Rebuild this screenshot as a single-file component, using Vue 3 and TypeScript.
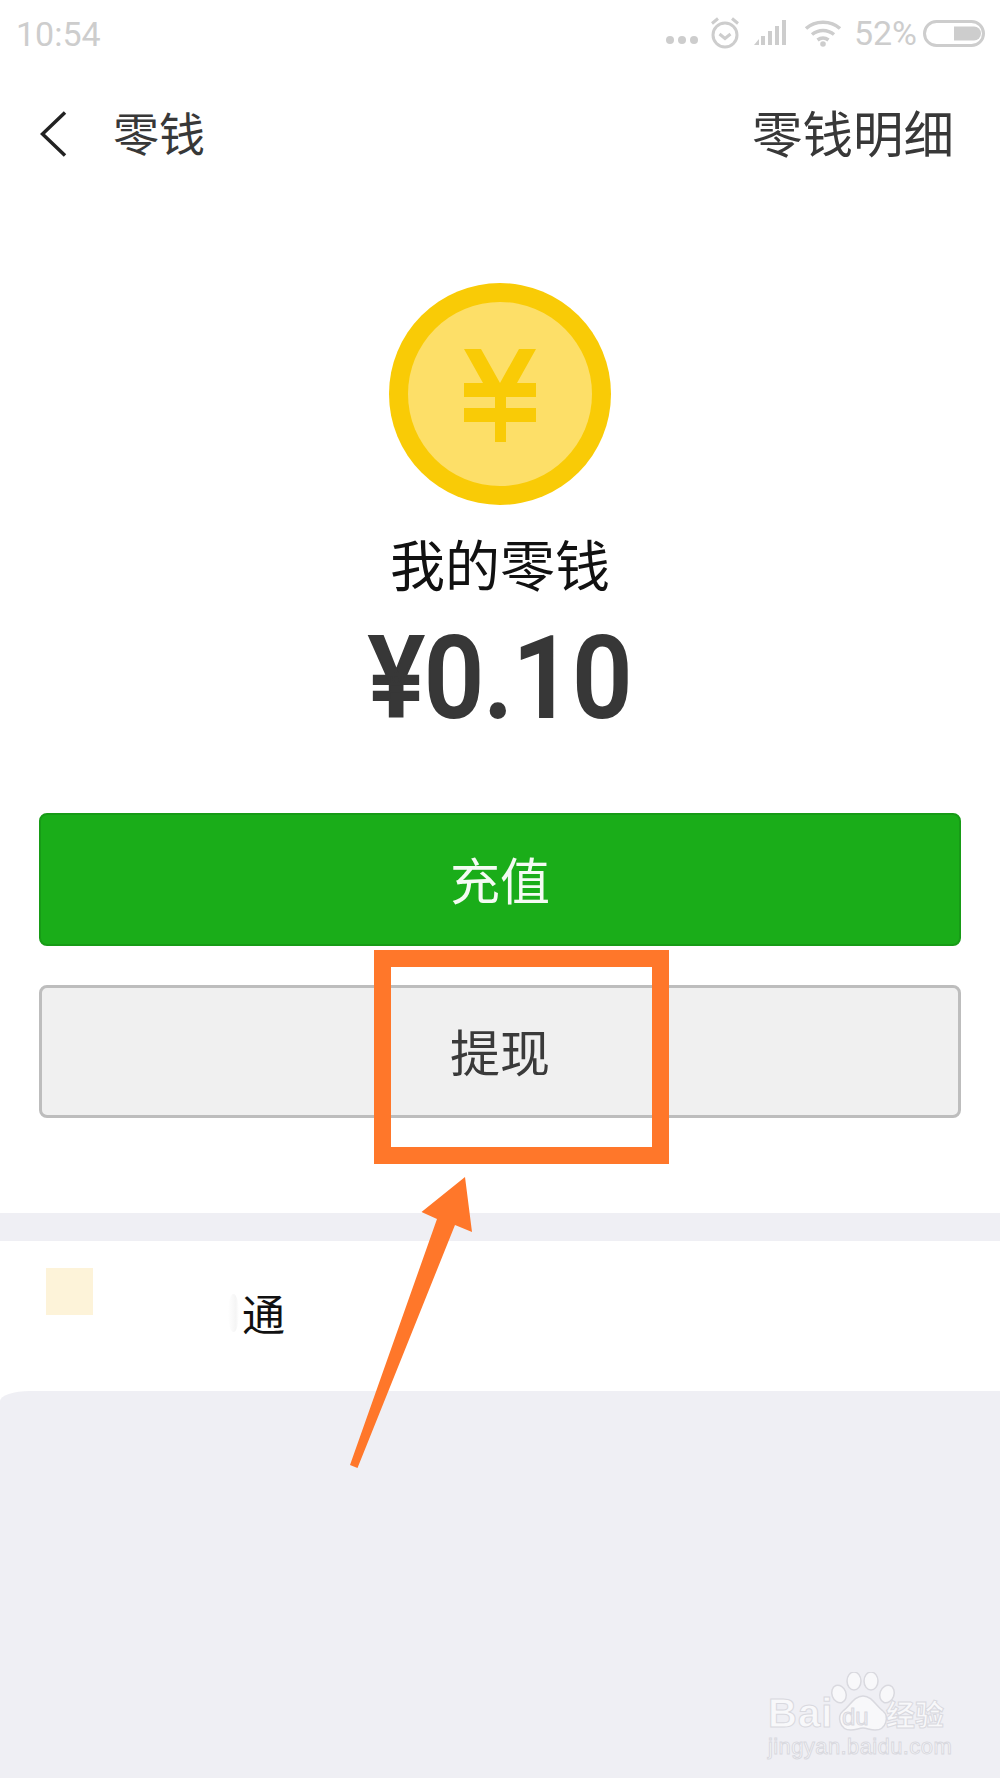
<script setup lang="ts">
const signalBars: { x: number; y: number }[] = [
  { x: 760, y: 36 },
  { x: 767, y: 31 },
  { x: 774, y: 26 },
  { x: 781, y: 20 },
]
</script>

<template>
  <div class="page">
    <header class="status">
      <span class="time">10:54</span>
      <div class="status-right">
        <svg class="ic-dots" width="32" height="10" viewBox="0 0 32 10">
          <circle cx="4" cy="5" r="4" />
          <circle cx="16" cy="5" r="4" />
          <circle cx="28" cy="5" r="4" />
        </svg>
        <svg class="ic-alarm" width="30" height="32" viewBox="0 0 30 32">
          <circle cx="15" cy="18" r="12" />
          <path d="M9.500 17l5.500 4.500 5.500-4.500M2 6.500l6-5M28 6.500l-6-5" />
        </svg>
        <svg class="ic-signal" width="36" height="26" viewBox="753 20 36 26">
          <path d="M753 45l5-6v6z" />
          <rect v-for="b in signalBars" :key="b.x" :x="b.x" :y="b.y" width="4" :height="45 - b.y" />
        </svg>
        <svg class="ic-wifi" width="38" height="28" viewBox="0 0 38 28">
          <path d="M2 9.500C11 1 27 1 36 9.500M8 15.500c6.500-5.500 15.500-5.500 22 0M13.500 21c3.500-2.500 7.500-2.500 11 0" />
          <circle cx="19" cy="25" r="2.800" />
        </svg>
        <span class="pct">52%</span>
        <svg class="ic-batt" width="62" height="27" viewBox="0 0 62 27">
          <rect x="1.500" y="1.500" width="59" height="24" rx="12" />
          <path d="M31 6.500h20a7 7 0 0 1 0 14H31z" />
        </svg>
      </div>
    </header>

    <nav class="nav">
      <div class="nav-left">
        <svg class="back" width="27" height="46" viewBox="0 0 27 46">
          <path d="M25 1.500L2.500 23 25 44.500" />
        </svg>
        <span class="nav-title">零钱</span>
      </div>
      <span class="nav-link">零钱明细</span>
    </nav>

    <section class="hero">
      <svg class="coin" width="222" height="222" viewBox="0 0 222 222">
        <circle cx="111" cy="111" r="111" fill="#f9cb06" />
        <circle cx="111" cy="111" r="92" fill="#fddf68" />
        <path
          fill="#f9cb06"
          d="M75 66H92L111 100 130 66H147L128 100H147V114H117V125H147V139H117V159H106V139H75V125H106V114H75V100H94Z"
        />
      </svg>
      <div class="hero-label">我的零钱</div>
      <div class="hero-amount">¥0.10</div>
    </section>

    <div class="actions">
      <button class="btn btn-green" type="button">充值</button>
      <button class="btn btn-gray" type="button">提现</button>
    </div>

    <div class="band"></div>

    <div class="row">
      <div class="row-icon"></div>
      <span class="row-smudge"></span>
      <span class="row-text">通</span>
    </div>

    <div class="rest"></div>

    <div class="highlight"></div>
    <svg class="arrow" width="130" height="300" viewBox="350 1175 130 300">
      <path d="M465 1177L421.500 1212 437 1219 350 1465 357.500 1468 455 1225 472 1232z" />
    </svg>

    <div class="mark">
      <svg class="paw" width="74" height="60" viewBox="0 0 74 60">
        <ellipse cx="11" cy="22" rx="7" ry="9" transform="rotate(-20 11 22)" />
        <ellipse cx="26" cy="9" rx="7" ry="9" />
        <ellipse cx="43" cy="9" rx="7" ry="9" />
        <ellipse cx="59" cy="22" rx="7" ry="9" transform="rotate(20 59 22)" />
        <path d="M35 24c9 0 13 10 20 15 6 5 4 19-8 19-5 0-8-2-12-2s-7 2-12 2C11 58 9 44 15 39c7-5 11-15 20-15z" />
      </svg>
      <div class="mark-top">
        <span class="mark-bai">Bai</span>
        <span class="mark-du">du</span>
        <span class="mark-cn">经验</span>
      </div>
      <div class="mark-url">jingyan.baidu.com</div>
    </div>
  </div>
</template>

<style scoped>
.page {
  position: relative;
  width: 1000px;
  height: 1778px;
  overflow: hidden;
  display: flex;
  flex-direction: column;
  background: #fff;
  font-family: "Noto Sans CJK SC", "Noto Sans", sans-serif;
}

.status {
  height: 60px;
  flex: none;
  display: flex;
  align-items: center;
  justify-content: space-between;
  padding: 0 15px 0 16px;
  color: #cdcdcd;
  font-family: Roboto, sans-serif;
  font-size: 34px;
}
.time {
  position: relative;
  top: 4px;
}
.status-right {
  display: flex;
  align-items: center;
  position: relative;
  top: 3px;
}
.ic-dots {
  fill: #cdcdcd;
  margin-right: 12px;
  margin-top: 14px;
}
.ic-alarm {
  fill: none;
  stroke: #cdcdcd;
  stroke-width: 3;
  margin-right: 14px;
}
.ic-signal {
  fill: #cdcdcd;
  margin-right: 14px;
}
.ic-wifi {
  fill: none;
  stroke: #cdcdcd;
  stroke-width: 3.500;
  margin-right: 12px;
}
.ic-wifi circle {
  fill: #cdcdcd;
  stroke: none;
}
.pct {
  margin-right: 6px;
}
.ic-batt rect {
  fill: none;
  stroke: #cdcdcd;
  stroke-width: 3;
}
.ic-batt path {
  fill: #cdcdcd;
}

.nav {
  height: 148px;
  flex: none;
  display: flex;
  align-items: center;
  justify-content: space-between;
  padding: 0 46px 0 40px;
  color: #383838;
}
.nav-left {
  display: flex;
  align-items: center;
}
.back {
  fill: none;
  stroke: #222;
  stroke-width: 3.500;
  margin-right: 46px;
}
.nav-title {
  font-size: 46px;
  line-height: 60px;
  margin-bottom: 6px;
}
.nav-link {
  font-size: 50.500px;
  line-height: 60px;
  margin-bottom: 6px;
}

.hero {
  flex: none;
  display: flex;
  flex-direction: column;
  align-items: center;
  padding-top: 75px;
}
.coin {
  display: block;
}
.hero-label {
  margin-top: 22px;
  font-size: 55px;
  line-height: 70px;
  color: #111;
}
.hero-amount {
  margin-top: 21px;
  font-family: Roboto, sans-serif;
  font-weight: 500;
  font-size: 114px;
  line-height: 120px;
  color: #373737;
  -webkit-text-stroke: 2px #373737;
  transform: scaleX(0.92);
}

.actions {
  flex: none;
  display: flex;
  flex-direction: column;
  gap: 39px;
  padding: 75px 39px 0;
}
.btn {
  display: block;
  width: 100%;
  height: 133px;
  margin: 0;
  padding: 0 0 4px;
  border-radius: 8px;
  font-family: inherit;
  font-size: 50px;
}
.btn-green {
  background: #1aad19;
  border: 2px solid #179b16;
  color: #f4fbf3;
}
.btn-gray {
  background: #f0f0f0;
  border: 3px solid #bdbdbd;
  color: #3a3a3a;
}

.band {
  flex: none;
  height: 28px;
  margin-top: 95px;
  background: #efeff4;
}
.row {
  flex: none;
  height: 150px;
  display: flex;
  align-items: flex-start;
  background: #fff;
}
.row-icon {
  width: 47px;
  height: 47px;
  margin: 27px 0 0 46px;
  background: #fdf3d9;
}
.row-smudge {
  width: 11px;
  height: 38px;
  margin: 53px 0 0 135px;
  background: linear-gradient(90deg, #fff, #eeeeee 70%, #fff);
  border-radius: 50%;
  opacity: 0.6;
}
.row-text {
  margin: 43px 0 0 3px;
  font-size: 43px;
  line-height: 56px;
  color: #111;
}
.rest {
  flex: 1;
  background: #efeff4;
  border-top-left-radius: 30px 10px;
}

.highlight {
  position: absolute;
  left: 374px;
  top: 950px;
  width: 295px;
  height: 214px;
  box-sizing: border-box;
  border: 17px solid #ff772a;
}
.arrow {
  position: absolute;
  left: 350px;
  top: 1175px;
  fill: #ff772a;
}

.mark {
  position: absolute;
  left: 768px;
  top: 1672px;
  width: 180px;
  height: 86px;
  color: #f8f8fa;
  -webkit-text-stroke: 1px #d9d9df;
}
.paw {
  position: absolute;
  left: 60px;
  top: 0;
  fill: #f8f8fa;
  stroke: #d9d9df;
  stroke-width: 1.500;
}
.mark-top {
  position: absolute;
  left: 0;
  top: 18px;
  width: 180px;
  height: 46px;
}
.mark-bai {
  position: absolute;
  left: 0;
  top: 0;
  font-family: "Liberation Sans", sans-serif;
  font-weight: 700;
  font-size: 40px;
  line-height: 46px;
  letter-spacing: 1px;
}
.mark-du {
  position: absolute;
  left: 74px;
  top: 12px;
  font-family: "Liberation Sans", sans-serif;
  font-size: 24px;
  line-height: 30px;
  color: #efeff4;
}
.mark-cn {
  position: absolute;
  left: 118px;
  top: 2px;
  font-size: 29px;
  line-height: 42px;
  font-weight: 700;
}
.mark-url {
  position: absolute;
  left: 0;
  top: 62px;
  font-family: "Liberation Sans", sans-serif;
  font-size: 22px;
  line-height: 26px;
  letter-spacing: 0.400px;
  white-space: nowrap;
}
</style>
